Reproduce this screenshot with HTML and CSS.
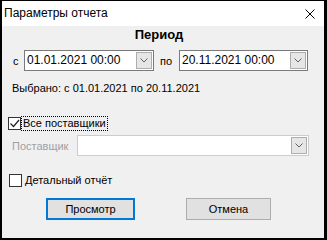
FILE: index.html
```html
<!DOCTYPE html>
<html lang="ru">
<head>
<meta charset="utf-8">
<title>Параметры отчета</title>
<link rel="stylesheet" href="styles.css">
</head>
<body>
<div class="window">
  <div class="titlebar">
    <span class="title">Параметры отчета</span>
    <svg class="close" width="10" height="10" viewBox="0 0 10 10"><path d="M0.5 0.5 L9.5 9.5 M9.5 0.5 L0.5 9.5" stroke="#000" stroke-width="1" fill="none"/></svg>
  </div>
  <div class="content">
    <div class="period">Период</div>
    <div class="range-row">
      <span class="lbl-from">с</span>
      <div class="combo combo-from">
        <span class="combo-text">01.01.2021 00:00</span>
        <span class="drop"><svg width="8" height="5" viewBox="0 0 8 5"><path d="M0.5 0.5 L4 4 L7.5 0.5" stroke="#606060" fill="none"/></svg></span>
      </div>
      <span class="lbl-to">по</span>
      <div class="combo combo-to">
        <span class="combo-text">20.11.2021 00:00</span>
        <span class="drop"><svg width="8" height="5" viewBox="0 0 8 5"><path d="M0.5 0.5 L4 4 L7.5 0.5" stroke="#606060" fill="none"/></svg></span>
      </div>
    </div>
    <div class="selected">Выбрано: с 01.01.2021 по 20.11.2021</div>
    <div class="check-row all">
      <span class="box"><svg width="11" height="11" viewBox="0 0 11 11"><path d="M1.5 5.5 L4.5 8.5 L10 2" stroke="#222" stroke-width="1.2" fill="none"/></svg></span>
      <span class="check-text focus">Все поставщики</span>
    </div>
    <div class="supplier-row">
      <span class="lbl-supplier">Поставщик</span>
      <div class="combo combo-supplier disabled">
        <span class="combo-text"></span>
        <span class="drop"><svg width="8" height="5" viewBox="0 0 8 5"><path d="M0.5 0.5 L4 4 L7.5 0.5" stroke="#606060" fill="none"/></svg></span>
      </div>
    </div>
    <div class="check-row detail">
      <span class="box"></span>
      <span class="check-text">Детальный отчёт</span>
    </div>
    <div class="buttons">
      <button class="btn primary">Просмотр</button>
      <button class="btn cancel">Отмена</button>
    </div>
  </div>
</div>
</body>
</html>
```
FILE: styles.css
```css
* { box-sizing: border-box; }
html, body { margin: 0; padding: 0; background: #000; }
body { font-family: "Liberation Sans", Arial, sans-serif; font-size: 11px; color: #000; }

.window {
  width: 327px;
  height: 240px;
  border-style: solid;
  border-color: #000;
  border-width: 1px 3px 2px 2px;
  display: flex;
  flex-direction: column;
  background: #f0f0f0;
}

.titlebar {
  height: 25px;
  background: #fff;
  display: flex;
  align-items: center;
  justify-content: space-between;
  padding: 0 9px 0 2px;
}
.title { font-size: 12px; line-height: 15px; }
.close { display: block; margin-top: 1px; }

.content { flex: 1; }

.period {
  margin-top: 1px;
  font-weight: bold;
  font-size: 13px;
  line-height: 15px;
  text-align: center;
  padding-right: 8px;
}

.range-row {
  margin-top: 8px;
  display: flex;
  align-items: center;
  padding-left: 11px;
}
.lbl-from { width: 11px; }
.lbl-to { width: 25px; padding-left: 6px; }

.combo {
  height: 21px;
  background: #fff;
  border: 1px solid #7a7a7a;
  display: flex;
  align-items: center;
  justify-content: space-between;
  padding: 0 1px 0 2px;
}
.combo-from { width: 130px; }
.combo-to { width: 129px; }
.combo-text { font-size: 12px; line-height: 15px; }
.drop {
  width: 16px;
  height: 17px;
  background: #e6e6e6;
  border: 1px solid #adadad;
  display: flex;
  align-items: center;
  justify-content: center;
}
.drop svg { display: block; }

.selected {
  margin-top: 10px;
  padding-left: 10px;
  line-height: 15px;
}

.check-row {
  display: flex;
  align-items: center;
  padding-left: 6px;
  height: 14px;
}
.check-row.all { margin-top: 20px; }
.check-row.detail { margin-top: 17px; padding-left: 7px; }
.box {
  width: 13px;
  height: 13px;
  background: #fff;
  border: 1px solid #333;
  display: flex;
  align-items: center;
  justify-content: center;
}
.box svg { display: block; }
.check-text { margin-left: 1px; line-height: 13px; padding: 0 1px; }
.detail .check-text { margin-left: 2px; }
.focus { outline: 1px dotted #000; outline-offset: 0; }

.supplier-row {
  margin-top: 5px;
  display: flex;
  align-items: center;
  padding-left: 10px;
}
.lbl-supplier { width: 65px; color: #a0a0a0; }
.combo-supplier { width: 232px; border-color: #cccccc; }

.buttons {
  margin-top: 11px;
  display: flex;
  padding-left: 44px;
  gap: 51px;
}
.btn {
  font-family: inherit;
  font-size: 11px;
  height: 22px;
  background: #e1e1e1;
  color: #000;
  padding: 0;
  margin: 0;
}
.primary { width: 89px; border: 2px solid #0078d7; }
.cancel { width: 85px; border: 1px solid #adadad; }
```
